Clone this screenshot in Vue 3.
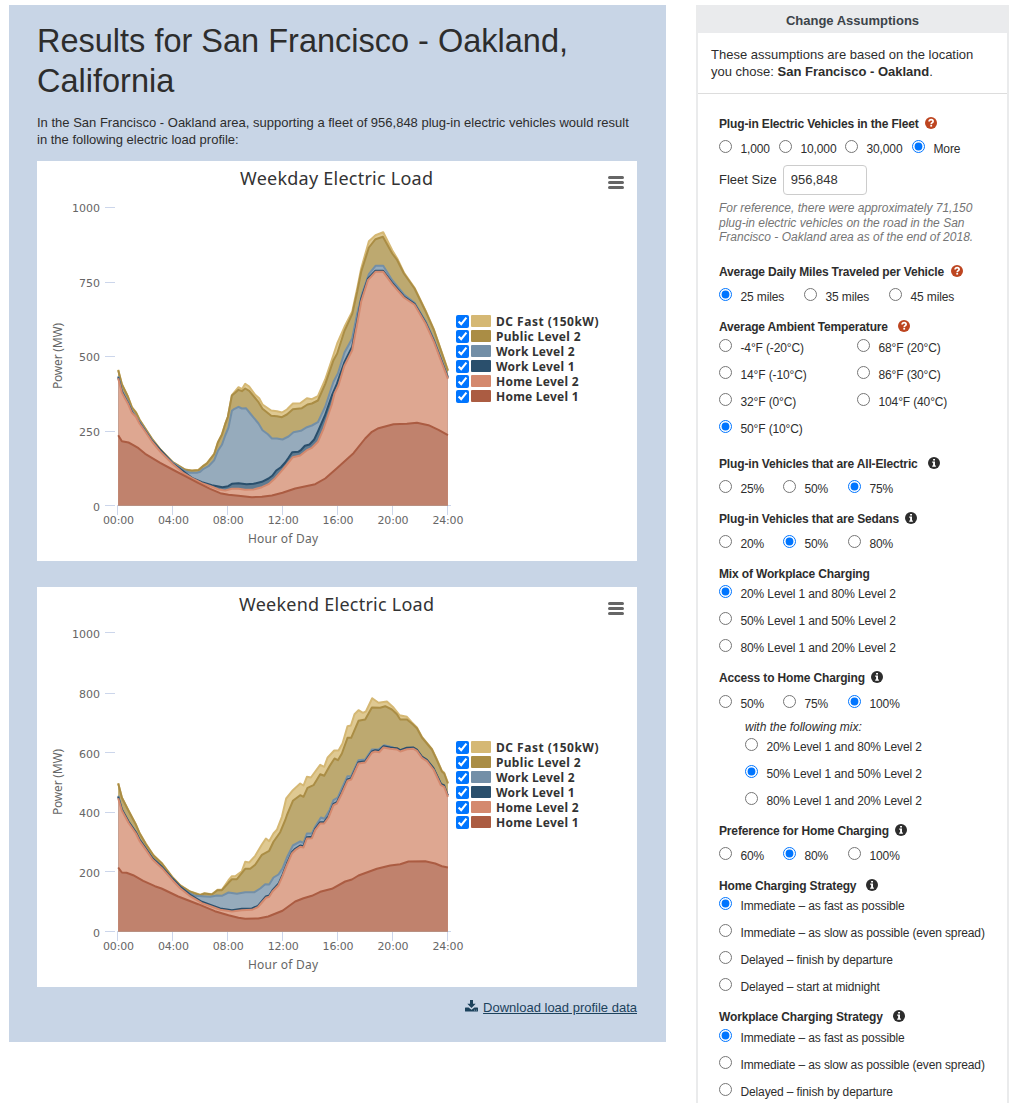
<script setup>
import { reactive } from 'vue'

// Curves are stored in third-of-a-pixel units measured from the plot origin.
const parse = (s) => s.trim().split(/\s+/).map((p) => p.split(',').map(Number))

const wdPublic = parse(`0,406 11,363 29,326 41,294 53,279 64,257 81,231 101,200 126,168 163,130 201,107 221,104 241,106 256,119 266,126 288,154 299,189 311,212 321,244 329,266 341,330 351,338 361,347 371,343 381,351 393,344 421,310 433,290 459,269 476,268 491,265 506,273 524,289 551,292 568,303 581,306 599,315 621,364 646,436 657,456 679,524 702,574 717,641 729,701 752,774 772,799 794,806 822,756 837,736 857,696 889,651 922,583 947,526 989,404`)
const weHome2 = parse(`0,400 11,362 31,326 53,294 64,272 81,248 103,216 131,190 163,154 186,130 216,106 251,85 281,74 306,65 341,60 371,64 401,65 419,73 431,87 443,101 453,104 463,120 481,139 493,166 506,200 521,234 531,244 546,254 556,252 566,279 581,280 591,304 606,324 618,324 631,342 646,379 656,384 671,414 688,452 699,456 721,504 741,507 761,536 771,540 783,538 796,552 816,548 836,546 846,540 866,547 886,548 896,542 911,521 926,511 946,486 968,439 978,434 989,404`)
const wePublic = parse(`0,444 11,401 31,362 53,320 64,295 83,262 106,228 131,204 163,162 186,138 216,119 246,109 259,114 281,111 298,124 311,124 331,146 341,157 356,157 381,188 396,188 411,200 431,230 453,242 466,269 486,298 501,334 506,349 524,392 546,409 556,404 568,431 586,439 606,472 618,467 634,496 649,519 659,514 671,534 688,581 699,581 721,632 741,636 761,672 786,671 801,676 821,666 836,652 846,636 866,636 881,624 896,610 911,582 941,546 956,514 971,480 978,474 989,444`)
const part = (pts, from, to, lift) => pts.filter(([x]) => x >= from && x <= to).map(([x, y]) => [x, y + lift])

const types = [
  { name: 'DC Fast (150kW)', line: '#d5b874', fill: '#dfc992', len: 102.5 },
  { name: 'Public Level 2', line: '#aa8d45', fill: '#bda970', len: 84.5 },
  { name: 'Work Level 2', line: '#738fa7', fill: '#96abbc', len: 78.5 },
  { name: 'Work Level 1', line: '#2a4f6c', fill: '#5f7b91', len: 78.5 },
  { name: 'Home Level 2', line: '#d4896e', fill: '#dea791', len: 82.5 },
  { name: 'Home Level 1', line: '#ab5c42', fill: '#c0826d', len: 82.5 }
]

const charts = [
  {
    title: 'Weekday Electric Load', len: 193, left: 203,
    ticks: [[1000, 46], [750, 121], [500, 195], [250, 270], [0, 344.5]],
    curves: [
      [...part(wdPublic, 0, 341, 1), ...parse(`361,355 371,349 381,365 393,357 411,332 423,322 433,303 459,285 476,283 491,279 506,288 524,306 546,307 566,322 581,319 599,328 621,378 646,452 657,486 679,536 702,581 717,651 729,711 752,793 772,811 795,820 822,766 837,741 857,699`), ...part(wdPublic, 889, 989, 2)],
      wdPublic,
      parse(`0,388 11,345 31,308 41,284 64,251 101,196 126,165 163,129 201,103 216,98 236,98 246,101 256,110 271,118 288,136 299,164 311,182 321,210 331,234 341,284 349,290 361,296 371,291 383,292 396,276 421,246 433,226 449,214 461,201 476,201 493,198 511,207 526,220 548,224 566,235 581,240 599,250 621,296 646,371 659,396 679,459 702,501 717,576 732,636 752,694 772,719 795,719 822,676 857,633 889,608 922,553 947,498 989,386`),
      parse(`0,385 11,341 31,304 41,280 64,248 101,194 163,127 221,83 251,70 281,61 313,55 330,58 341,65 361,67 385,64 406,65 431,71 451,81 462,89 474,105 488,115 501,129 511,143 522,160 540,161 549,167 560,179 574,183 588,198 600,224 620,270 641,330 656,365 678,428 702,476 717,553 729,620 749,680 772,704 795,704 822,668 857,627 889,605 922,549 947,494 989,383`),
      parse(`0,382 11,338 31,302 41,278 53,266 64,246 81,222 101,192 126,162 163,125 196,97 221,82 251,67 281,56 301,48 321,45 341,50 361,50 381,47 406,48 431,55 451,64 471,82 493,107 506,123 524,145 546,150 566,166 581,173 599,191 616,230 641,304 649,336 661,361 678,418 702,466 717,546 729,612 749,676 772,701 795,701 822,664 857,624 889,602 922,546 947,491 989,380`),
      parse(`0,211 11,193 31,189 44,182 61,172 81,155 126,128 163,108 201,88 241,67 276,50 306,37 331,32 361,29 401,25 431,26 461,30 493,38 531,51 591,64 621,81 656,112 706,157 741,201 761,221 781,232 826,244 866,245 896,248 931,241 961,227 989,211`)
    ]
  },
  {
    title: 'Weekend Electric Load', len: 195, left: 202,
    ticks: [[1000, 45.5], [800, 106], [600, 165.5], [400, 225], [200, 284.5], [0, 344.5]],
    curves: [
      [...part(wePublic, 0, 311, 1), ...parse(`331,154 341,166 351,166 371,181 381,209 393,207 411,227 431,261 443,279 453,271 466,294 476,305 491,344 504,399 524,424 546,444 556,438 566,464 578,462 606,500 618,494 628,521 648,543 661,543 673,564 688,616 698,618 709,652 721,664 734,656 743,660 762,700 781,686 806,690 826,672 844,649 866,644 881,627`), ...part(wePublic, 896, 989, 2)],
      wePublic,
      parse(`0,407 11,366 31,330 53,298 64,277 81,252 103,220 131,193 163,158 186,134 210,117 231,107 251,106 276,104 296,108 311,107 331,117 356,113 381,118 409,118 426,129 441,142 453,141 466,162 481,171 493,189 506,222 524,258 546,270 556,266 566,294 581,294 591,314 608,342 619,338 634,364 646,394 659,402 671,429 688,466 699,466 721,514 741,516 761,546 781,546 798,559 816,554 846,543 866,550 886,551 911,524 926,514 946,489 968,442 989,409`),
      part(weHome2, 0, 989, 4),
      weHome2,
      parse(`0,192 11,177 25,176 45,169 75,152 110,136 130,129 180,105 240,82 290,61 331,49 361,41 381,38 420,39 450,45 493,62 531,90 556,100 581,107 606,119 641,128 681,150 701,156 721,168 776,188 816,198 846,202 871,210 921,211 951,204 971,196 989,192`)
    ]
  }
]
const linePath = (pts) => 'M' + pts.map(([x, y]) => `${(81.2 + x / 3).toFixed(1)} ${(344.5 - y / 3).toFixed(1)}`).join('L')
const areaPath = (pts) => `${linePath(pts)}V344.5H81.2Z`
const hours = ['00:00', '04:00', '08:00', '12:00', '16:00', '20:00', '24:00']

const mixes = ['20% Level 1 and 80% Level 2', '50% Level 1 and 50% Level 2', '80% Level 1 and 20% Level 2']
const strategies = ['Immediate – as fast as possible', 'Immediate – as slow as possible (even spread)', 'Delayed – finish by departure']
const groups = reactive([
  { id: 'fleet', title: 'Plug-in Electric Vehicles in the Fleet', icon: 'q', options: ['1,000', '10,000', '30,000', 'More'], value: 'More', near: true },
  { id: 'miles', title: 'Average Daily Miles Traveled per Vehicle', icon: 'q', options: ['25 miles', '35 miles', '45 miles'], value: '25 miles', near: true },
  { id: 'temp', title: 'Average Ambient Temperature', icon: 'q', options: ['-4°F (-20°C)', '14°F (-10°C)', '32°F (0°C)', '50°F (10°C)', '68°F (20°C)', '86°F (30°C)', '104°F (40°C)'], value: '50°F (10°C)' },
  { id: 'electric', title: 'Plug-in Vehicles that are All-Electric', icon: 'i', options: ['25%', '50%', '75%'], value: '75%' },
  { id: 'sedans', title: 'Plug-in Vehicles that are Sedans', icon: 'i', options: ['20%', '50%', '80%'], value: '50%', near: true },
  { id: 'mix', title: 'Mix of Workplace Charging', options: mixes, value: mixes[0], stacked: true },
  { id: 'access', title: 'Access to Home Charging', icon: 'i', options: ['50%', '75%', '100%'], value: '100%', near: true, sub: { value: mixes[1] } },
  { id: 'preference', title: 'Preference for Home Charging', icon: 'i', options: ['60%', '80%', '100%'], value: '80%', near: true },
  { id: 'home', title: 'Home Charging Strategy', icon: 'i', options: [...strategies, 'Delayed – start at midnight'], value: strategies[0], stacked: true },
  { id: 'work', title: 'Workplace Charging Strategy', icon: 'i', options: strategies, value: strategies[0], stacked: true }
])
</script>

<template>
  <div class="page">
    <main class="results">
      <h1>Results for San Francisco - Oakland,<br>California</h1>
      <p class="lead">In the San Francisco - Oakland area, supporting a fleet of 956,848 plug-in electric vehicles would result<br>in the following electric load profile:</p>

      <section v-for="c in charts" :key="c.title" class="chart">
        <svg width="600" height="400" viewBox="0 0 600 400">
          <text class="title" :x="c.left" y="24" :textLength="c.len">{{ c.title }}</text>
          <g stroke="#666" stroke-width="3" stroke-linecap="round">
            <path d="M572.5 16.6H585.5M572.5 21.6H585.5M572.5 26.6H585.5" />
          </g>
          <g stroke="#ccd6eb" stroke-width="1">
            <path v-for="t in c.ticks" :key="t[0]" :d="`M68 ${t[1]}h10`" shape-rendering="crispEdges" />
            <path d="M80 344.5H414" />
            <path v-for="(h, i) in hours" :key="h" :d="`M${80.5 + i * 55} 344v10`" shape-rendering="crispEdges" />
          </g>
          <g v-for="(pts, i) in c.curves" :key="i">
            <path :d="areaPath(pts)" :fill="types[i].fill" />
            <path :d="linePath(pts)" :stroke="types[i].line" fill="none" stroke-width="2" stroke-linejoin="round" />
          </g>
          <text v-for="t in c.ticks" :key="t[0]" class="tick" x="63" :y="t[1] + 5" text-anchor="end">{{ t[0] }}</text>
          <text v-for="(h, i) in hours" :key="h" class="tick" :x="66 + i * 54.9" y="363" textLength="31">{{ h }}</text>
          <text class="axis" x="211" y="382" textLength="70">Hour of Day</text>
          <text class="axis" transform="translate(25 228) rotate(-90)" textLength="66">Power (MW)</text>
        </svg>
        <ul class="legend">
          <li v-for="t in types" :key="t.name">
            <input type="checkbox" checked>
            <svg width="130" height="15" viewBox="0 0 130 15">
              <rect x="0" y="1" width="20" height="12" rx="1" :fill="t.line" />
              <text x="25" y="12" :textLength="t.len">{{ t.name }}</text>
            </svg>
          </li>
        </ul>
      </section>

      <div class="download">
        <svg width="13" height="12" viewBox="0 0 13 12" fill="#1c425c">
          <path d="M5 0h3v3.700h2.700L6.500 7.900 2.300 3.700H5z" />
          <path d="M.6 7.500h3l2.900 2.300 2.900-2.300h3q.6 0 .6.6v2.800q0 .6-.6.6H.6q-.6 0-.6-.6V8.100q0-.6.6-.6zM9.200 9.700v.8h.8v-.8zm1.700 0v.8h.8v-.8z" fill-rule="evenodd" />
        </svg>
        <a href="#">Download load profile data</a>
      </div>
    </main>

    <aside class="panel">
      <h2>Change Assumptions</h2>
      <p class="intro">These assumptions are based on the location<br>you chose: <b>San Francisco - Oakland</b>.</p>
      <form>
        <div v-for="g in groups" :key="g.id" :class="['group', g.id, { stacked: g.stacked }]">
          <h3>
            <span>{{ g.title }}</span>
            <svg v-if="g.icon" :class="{ near: g.near }" width="12" height="12" viewBox="0 0 12 12">
              <circle cx="6" cy="6" r="6" :fill="g.icon === 'q' ? '#bd4520' : '#2d2d2d'" />
              <template v-if="g.icon === 'q'">
                <path d="M4.100 4.500C4.300 2 8.100 2.100 8.100 4.400 8.100 5.700 6.200 5.700 6.200 7.200" fill="none" stroke="#fff" stroke-width="1.700" />
                <rect x="5.300" y="8" width="1.800" height="1.600" fill="#fff" />
              </template>
              <path v-else d="M5.100 1.900h1.900v1.600H5.100zM4.200 4.500h2.800v4h.9v1.300H4.200V8.500h.9V5.800h-.9z" fill="#fff" />
            </svg>
          </h3>
          <div class="options">
            <label v-for="o in g.options" :key="o"><input v-model="g.value" type="radio" :name="g.id" :value="o"><span>{{ o }}</span></label>
          </div>
          <template v-if="g.id === 'fleet'">
            <div class="size"><span>Fleet Size</span><input type="text" value="956,848"></div>
            <p class="note">For reference, there were approximately 71,150<br>plug-in electric vehicles on the road in the San<br>Francisco - Oakland area as of the end of 2018.</p>
          </template>
          <div v-if="g.sub" class="sub">
            <em>with the following mix:</em>
            <label v-for="o in mixes" :key="o"><input v-model="g.sub.value" type="radio" name="submix" :value="o"><span>{{ o }}</span></label>
          </div>
        </div>
      </form>
    </aside>
  </div>
</template>

<style scoped>
.page {
  display: flex;
  align-items: flex-start;
  box-sizing: border-box;
  width: 1013px;
  height: 1103px;
  padding: 5px 0 0 9px;
  overflow: hidden;
  background: #fff;
  color: #2d2d2d;
  font-family: "Liberation Sans", Arial, sans-serif;
  font-size: 13px;
}
h1, h2, h3, p, ul { margin: 0; padding: 0; }
.results {
  flex: none;
  box-sizing: border-box;
  width: 657px;
  height: 1037px;
  padding: 16px 29px 0 28px;
  background: #c8d5e6;
}
h1 { font-size: 32.500px; line-height: 40px; font-weight: 400; white-space: nowrap; }
.lead { margin-top: 13px; line-height: 17px; height: 47px; white-space: nowrap; }
.chart { position: relative; height: 400px; margin-bottom: 26px; background: #fff; }
.chart > svg { display: block; }
.title { font: 18px "Noto Sans", sans-serif; fill: #333; }
.tick { font: 11px "DejaVu Sans", sans-serif; fill: #666; }
.axis { font: 12px "Noto Sans", sans-serif; fill: #666; }
.legend { position: absolute; left: 419px; top: 153px; list-style: none; }
.legend li { display: flex; height: 15px; }
.legend input { flex: none; width: 13px; height: 13px; margin: 1px 2px 0 0; }
.legend text { font: bold 12px "Noto Sans", sans-serif; fill: #333; }
.download { display: flex; justify-content: flex-end; gap: 5px; margin-top: -13px; line-height: 15px; }
.download a { color: #1c425c; }

.panel {
  flex: none;
  box-sizing: border-box;
  width: 313px;
  margin-left: 30px;
  border: solid #eaebec;
  border-width: 0 2px;
}
h2 {
  height: 28px;
  background: #eaebed;
  color: #3c4349;
  font-size: 13px;
  line-height: 31px;
  text-align: center;
}
.intro { height: 47px; padding: 13px 13px 0; border-bottom: 1px solid #ddd; line-height: 17px; white-space: nowrap; }
form { padding: 22px 0 0 21px; font-size: 12px; }
.group { margin-bottom: 15px; }
h3 { display: flex; align-items: flex-start; height: 15px; font-size: 12px; letter-spacing: -0.150px; line-height: 16px; white-space: nowrap; }
h3 svg { margin: 1px 0 0 10px; }
h3 svg.near { margin-left: 6.500px; }
.options { display: grid; grid-template-columns: 64px 65px 80px; margin-top: 5px; }
label { display: flex; height: 20px; letter-spacing: -0.130px; white-space: nowrap; }
label input { flex: none; width: 13px; height: 13px; margin: 4px 8.500px 0 0; }
label span { line-height: 27px; }
.fleet { margin-bottom: 20px; }
.fleet .options { grid-template-columns: 60px 66px 67px 60px; }
.miles .options { grid-template-columns: 85px 85px 80px; }
.temp { margin-bottom: 20px; }
.temp .options { grid-template: repeat(4, 20px) / 138px 120px; grid-auto-flow: column; row-gap: 7px; margin-top: 1px; }
.stacked .options { grid-template-columns: 1fr; row-gap: 7px; margin-top: 0; }
.work .options { margin-top: 1px; }
.access .options { margin-top: 6px; }
.size { display: flex; align-items: center; gap: 6px; margin-top: 9px; font-size: 13px; }
.size span { position: relative; top: -1px; }
.size input {
  box-sizing: border-box;
  width: 84px;
  height: 30px;
  padding: 0 7px 1px;
  border: 1px solid #ccc;
  border-radius: 4px;
  color: #333;
  font: 13px "Liberation Sans", Arial, sans-serif;
}
.note { height: 43px; margin-top: 6px; color: #757575; font-style: italic; line-height: 14.500px; white-space: nowrap; }
.sub { display: grid; row-gap: 7px; padding-left: 26px; margin-top: 8px; }
.sub em { height: 15px; margin-bottom: -7px; line-height: 16px; }
</style>

<style>
body { overflow: hidden; }
</style>
